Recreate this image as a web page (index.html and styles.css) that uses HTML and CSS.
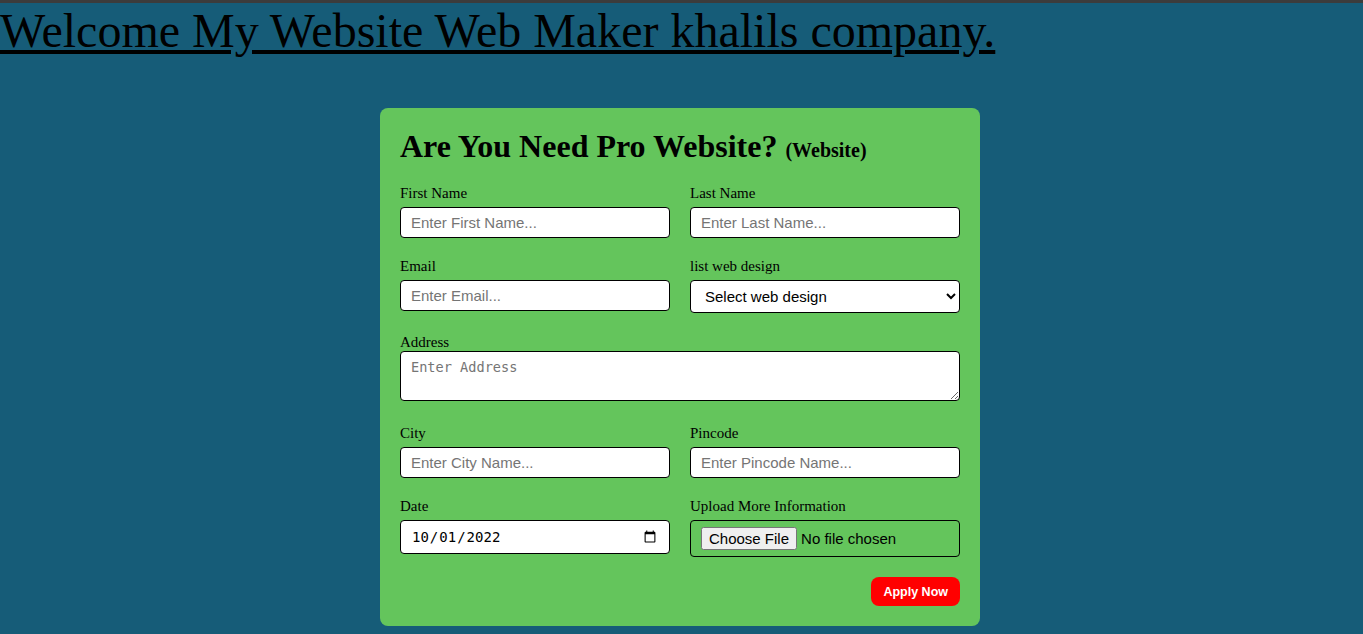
FILE: index.html
```html
<!DOCTYPE html>
<html>
<head>
<meta charset="utf-8">
<title>Web Maker</title>
<link rel="stylesheet" href="styles.css">
</head>
<body>
<div class="topbar"></div>
<a class="welcome" href="#">Welcome My Website Web Maker khalils company.</a>
<form class="card">
  <h2 class="title">Are You Need Pro Website? <small>(Website)</small></h2>
  <div class="grid">
    <div class="field">
      <label>First Name</label>
      <input type="text" placeholder="Enter First Name...">
    </div>
    <div class="field">
      <label>Last Name</label>
      <input type="text" placeholder="Enter Last Name...">
    </div>
    <div class="field">
      <label>Email</label>
      <input type="email" placeholder="Enter Email...">
    </div>
    <div class="field">
      <label>list web design</label>
      <select><option>Select web design</option></select>
    </div>
    <div class="field wide address">
      <label>Address</label>
      <textarea placeholder="Enter Address"></textarea>
    </div>
    <div class="field">
      <label>City</label>
      <input type="text" placeholder="Enter City Name...">
    </div>
    <div class="field">
      <label>Pincode</label>
      <input type="text" placeholder="Enter Pincode Name...">
    </div>
    <div class="field">
      <label>Date</label>
      <input type="date" class="date" value="2022-10-01">
    </div>
    <div class="field">
      <label>Upload More Information</label>
      <div class="filebox"><input type="file"></div>
    </div>
  </div>
  <div class="actions"><button type="button" class="apply">Apply Now</button></div>
</form>
</body>
</html>
```

FILE: styles.css
```css
html, body {
  margin: 0;
  padding: 0;
}
body {
  background: #165c78;
  font-family: "Liberation Serif", "Times New Roman", serif;
  min-height: 634px;
  padding-right: 3px;
}
.topbar {
  height: 3px;
  background: #3c3c3c;
  margin-right: -3px;
}
.welcome {
  display: inline-block;
  font-size: 48px;
  color: #000;
  text-decoration: underline;
  line-height: 55px;
}
.card {
  width: 560px;
  margin: 50px auto 0;
  background: #64c55c;
  border-radius: 8px;
  padding: 20px;
  box-sizing: content-box;
}
.title {
  margin: 0 0 16px;
  font-size: 32px;
  line-height: 37px;
  font-weight: bold;
}
.title small {
  font-size: 20px;
}
.grid {
  display: grid;
  grid-template-columns: minmax(0, 1fr) minmax(0, 1fr);
  column-gap: 20px;
  row-gap: 20px;
}
.field {
  display: flex;
  flex-direction: column;
  align-items: stretch;
  min-width: 0;
}
.field label {
  font-size: 15px;
  line-height: 17px;
  margin-bottom: 5px;
}
.wide {
  grid-column: 1 / 3;
}
.address {
  margin-top: 1px;
  margin-bottom: 4px;
}
.address label {
  margin-bottom: 0;
}
input[type="text"], input[type="email"] {
  height: 31px;
  box-sizing: border-box;
  border: 1px solid #000;
  border-radius: 4px;
  padding: 0 10px;
  font-family: "Liberation Sans", Arial, sans-serif;
  font-size: 15px;
  background: #fff;
  margin: 0;
  min-width: 0;
}
input::placeholder, textarea::placeholder {
  color: #757575;
}
select {
  height: 33px;
  box-sizing: border-box;
  border: 1px solid #000;
  border-radius: 4px;
  padding: 0 10px;
  font-family: "Liberation Sans", Arial, sans-serif;
  font-size: 15px;
  background: #fff;
  color: #000;
  margin: 0;
  min-width: 0;
}
textarea {
  height: 50px;
  box-sizing: border-box;
  border: 1px solid #000;
  border-radius: 4px;
  padding: 7px 10px;
  font-family: "DejaVu Sans Mono", monospace;
  font-size: 13.6px;
  margin: 0;
  resize: vertical;
  display: block;
}
.date {
  height: 34px;
  box-sizing: border-box;
  border: 1px solid #000;
  border-radius: 4px;
  padding: 0 10px;
  font-family: "DejaVu Sans Mono", monospace;
  font-size: 14px;
  background: #fff;
  margin: 0;
  min-width: 0;
}
.filebox {
  height: 37px;
  box-sizing: border-box;
  border: 1px solid #000;
  border-radius: 4px;
  padding: 0 10px;
  display: flex;
  align-items: center;
}
.filebox input {
  font-family: "Liberation Sans", Arial, sans-serif;
  font-size: 15px;
  color: #000;
  margin: 0;
  min-width: 0;
}
.actions {
  display: flex;
  justify-content: flex-end;
  margin-top: 20px;
}
.apply {
  background: #ff0000;
  color: #fff;
  border: none;
  border-radius: 8px;
  height: 29px;
  padding: 0 12px;
  font-family: "Liberation Sans", Arial, sans-serif;
  font-size: 12.5px;
  font-weight: bold;
  cursor: pointer;
}
```
